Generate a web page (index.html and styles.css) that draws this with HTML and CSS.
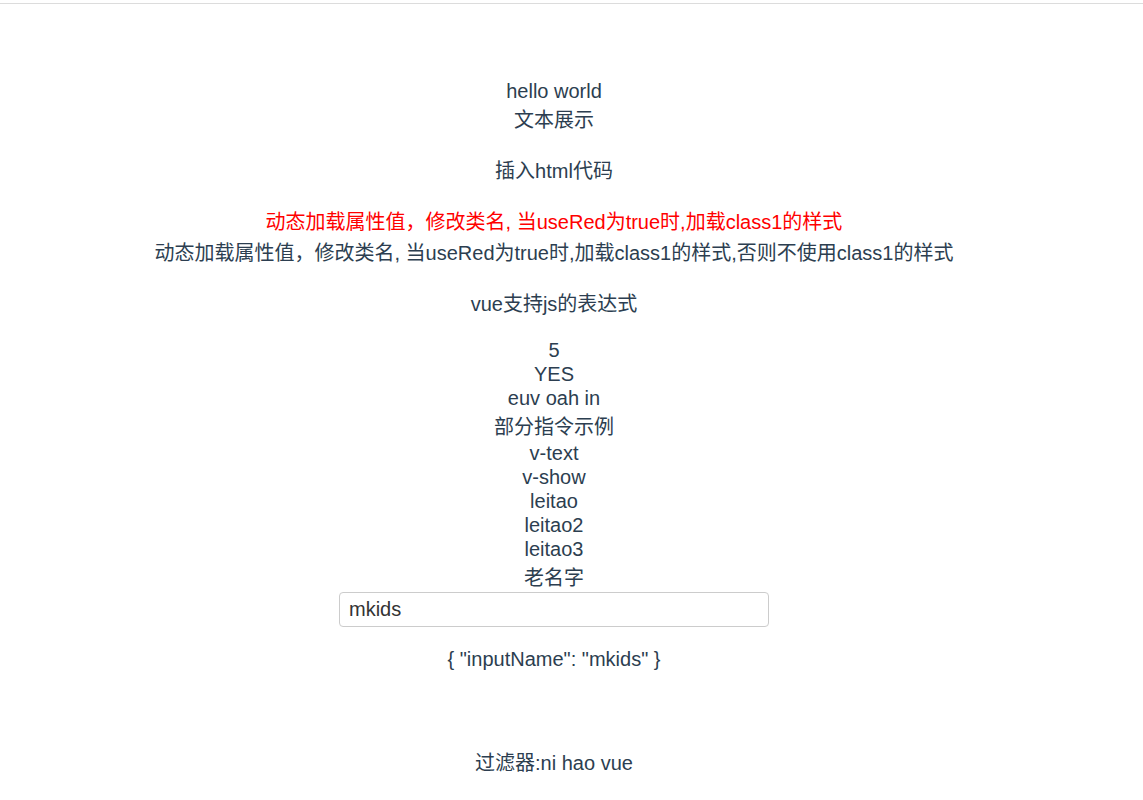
FILE: index.html
```html
<!DOCTYPE html>
<html lang="zh">
<head>
<meta charset="utf-8">
<title>vue demo</title>
<link rel="stylesheet" href="styles.css">
</head>
<body>
<div class="topline"></div>
<div id="app">
  <div>hello world</div>
  <div class="cjk">文本展示</div>
  <p class="cjk">插入html代码</p>
  <div class="cjk red">动态加载属性值，修改类名, 当useRed为true时,加载class1的样式</div>
  <div class="cjk">动态加载属性值，修改类名, 当useRed为true时,加载class1的样式,否则不使用class1的样式</div>
  <p class="cjk">vue支持js的表达式</p>
  <div>5</div>
  <div>YES</div>
  <div>euv oah in</div>
  <div class="cjk">部分指令示例</div>
  <div>v-text</div>
  <div>v-show</div>
  <div>leitao</div>
  <div>leitao2</div>
  <div>leitao3</div>
  <div class="cjk">老名字</div>
  <input class="field" type="text" value="mkids">
  <p>{ "inputName": "mkids" }</p>
  <div class="spacer"></div>
  <div class="cjk">过滤器:ni hao vue</div>
</div>
</body>
</html>
```
FILE: styles.css
```css
html, body {
  margin: 0;
  padding: 0;
  background: #fff;
}
.topline {
  margin-top: 3px;
  height: 0;
  border-top: 1px solid #dcdcdc;
}
#app {
  width: 1108px;
  margin-top: 75px;
  text-align: center;
  font-family: "Liberation Sans", Arial, "Noto Sans CJK SC", sans-serif;
  font-size: 20px;
  line-height: 24px;
  color: #2c3e50;
}
#app p {
  margin: 20px 0;
}
#app .cjk {
  padding-top: 4px;
  line-height: 27px;
}
.red {
  color: #ff0000;
}
.field {
  display: block;
  margin: 0 auto;
  width: 430px;
  height: 35px;
  box-sizing: border-box;
  padding: 0 9px;
  border: 1px solid #cccccc;
  border-radius: 4px;
  font-family: "Liberation Sans", Arial, sans-serif;
  font-size: 20px;
  color: #333333;
  background: #fff;
  outline: none;
}
.spacer {
  height: 55px;
}
```
